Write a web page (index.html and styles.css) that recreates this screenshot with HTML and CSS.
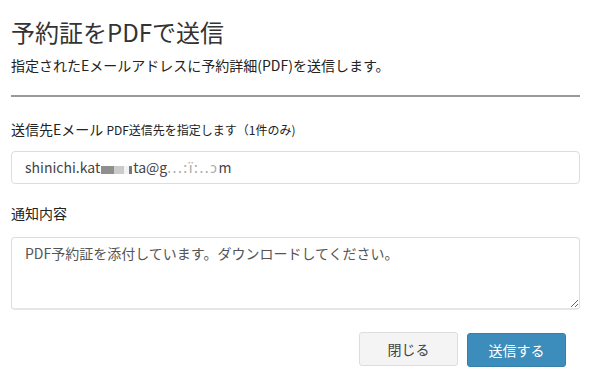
FILE: index.html
```html
<!DOCTYPE html>
<html lang="ja">
<head>
<meta charset="utf-8">
<link rel="stylesheet" href="styles.css">
</head>
<body>
<div class="modal">
  <div class="header">
    <h1 class="title">予約証をPDFで送信</h1>
    <p class="lead">指定されたEメールアドレスに予約詳細(PDF)を送信します。</p>
  </div>
  <div class="body">
    <div class="group">
      <label class="label">送信先Eメール <span class="hint">PDF送信先を指定します（1件のみ)</span></label>
      <div class="input">shinichi.kat<span class="mask"><i class="m1"></i><i class="m2"></i><i class="m3"></i><i class="m4"></i></span>ta@g<span class="faint">...:ï:..ɔ</span>m</div>
    </div>
    <div class="group second">
      <label class="label">通知内容</label>
      <textarea class="textarea">PDF予約証を添付しています。ダウンロードしてください。</textarea>
    </div>
  </div>
  <div class="footer">
    <button class="btn btn-default">閉じる</button>
    <button class="btn btn-primary">送信する</button>
  </div>
</div>
</body>
</html>
```
FILE: styles.css
```css
* { box-sizing: border-box; }
html, body { margin: 0; padding: 0; background: #fff; }
body {
  font-family: "Noto Sans CJK JP", "Noto Sans", sans-serif;
  color: #333;
  width: 589px;
  height: 387px;
  overflow: hidden;
}
.modal { padding: 0 9px 0 11px; }
.header {
  padding-top: 14px;
  padding-bottom: 20px;
  border-bottom: 2px solid #9a9a9a;
}
.title {
  margin: 0;
  font-size: 24px;
  font-weight: 400;
  line-height: 36px;
  color: #333;
}
.lead {
  margin: 5px 0 0;
  font-size: 14px;
  line-height: 20px;
  color: #222;
}
.body { padding-top: 22px; }
.group { display: flex; flex-direction: column; }
.group.second { margin-top: 19px; }
.label {
  font-size: 14px;
  line-height: 20px;
  color: #222;
  margin-bottom: 11px;
}
.hint { font-size: 12px; }
.input {
  height: 33px;
  border: 1px solid #dcdde2;
  border-radius: 4px;
  padding: 0 13px;
  font-size: 14px;
  line-height: 31px;
  color: #444;
  white-space: nowrap;
}
.mask { display: inline-flex; gap: 0; vertical-align: -1px; padding: 0 1px; }
.mask i { display: inline-block; height: 8px; }
.m1 { width: 13px; background: #8f8f8f; }
.m2 { width: 10px; background: #cbcbcb; }
.m3 { width: 5px; background: #f3f3f3; }
.m4 { width: 3px; background: #7a7a7a; }
.faint { color: #aaa; letter-spacing: 1.5px; }
.textarea {
  display: block;
  width: 100%;
  height: 73px;
  margin-top: 3px;
  border: 1px solid #dcdde2;
  border-bottom: 2px solid #e6e6ea;
  border-radius: 4px;
  padding: 5px 13px;
  font-family: inherit;
  font-size: 14px;
  line-height: 20px;
  color: #555;
  resize: vertical;
  background: #fff;
}
.footer {
  display: flex;
  justify-content: flex-end;
  gap: 9px;
  padding-top: 22px;
  padding-right: 14px;
}
.btn {
  width: 99px;
  height: 34px;
  border-radius: 3px;
  font-family: inherit;
  font-size: 14px;
  border: 1px solid transparent;
  padding: 0;
}
.btn-default { background: #f4f4f4; border-color: #ddd; color: #444; }
.btn-primary { background: #3c8dbc; border-color: #367fa9; color: #fff; margin-top: 1px; }
```
